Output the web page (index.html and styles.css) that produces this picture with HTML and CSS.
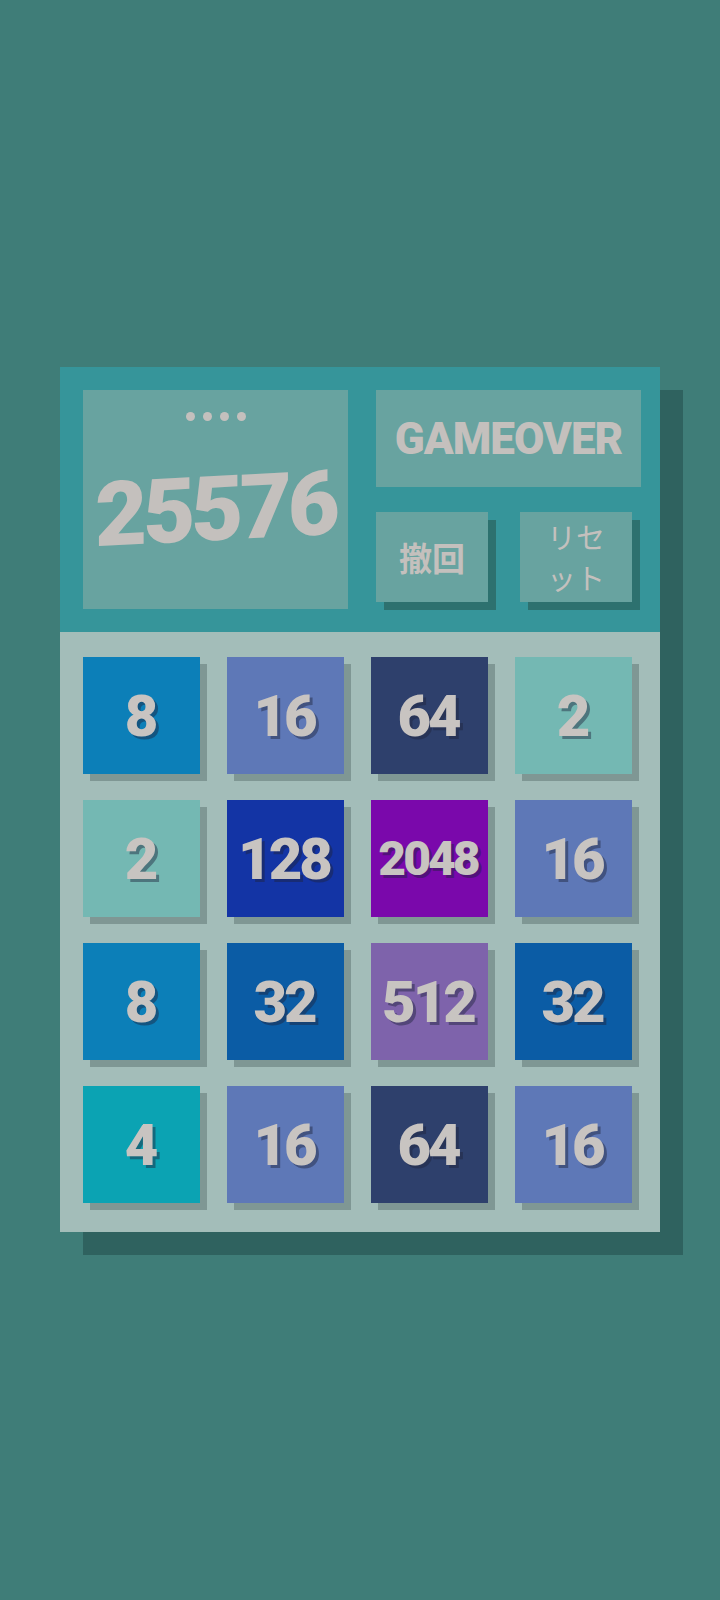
FILE: index.html
```html
<!DOCTYPE html>
<html lang="ja">
<head>
<meta charset="utf-8">
<title>2048</title>
<link rel="stylesheet" href="styles.css">
</head>
<body>
<div class="panel">
  <div class="header">
    <div class="score-box">
      <div class="dots"><span></span><span></span><span></span><span></span></div>
      <div class="score">25576</div>
    </div>
    <div class="side">
      <div class="status">GAMEOVER</div>
      <div class="buttons">
        <div class="btn btn-undo">撤回</div>
        <div class="btn btn-reset">リセ<br>ット</div>
      </div>
    </div>
  </div>
  <div class="board">
    <div class="tile t8">8</div>
    <div class="tile t16">16</div>
    <div class="tile t64">64</div>
    <div class="tile t2">2</div>
    <div class="tile t2">2</div>
    <div class="tile t128">128</div>
    <div class="tile t2048 four">2048</div>
    <div class="tile t16">16</div>
    <div class="tile t8">8</div>
    <div class="tile t32">32</div>
    <div class="tile t512">512</div>
    <div class="tile t32">32</div>
    <div class="tile t4">4</div>
    <div class="tile t16">16</div>
    <div class="tile t64">64</div>
    <div class="tile t16">16</div>
  </div>
</div>
</body>
</html>
```
FILE: styles.css
```css
html, body {
  margin: 0;
  padding: 0;
  background: #3f7d78;
}
body {
  height: 1600px;
  font-family: Roboto, "Noto Sans CJK JP", sans-serif;
  color: #c4c0bd;
}
.panel {
  width: 600px;
  margin: 367px 0 0 60px;
  box-shadow: 23px 23px 0 #2f625f;
}
.header {
  background: #36959a;
  height: 265px;
  box-sizing: border-box;
  padding: 23px 19px 23px 23px;
  display: grid;
  grid-template-columns: 265px 265px;
  column-gap: 28px;
}
.score-box {
  background: #68a3a0;
  display: flex;
  flex-direction: column;
  align-items: center;
}
.dots {
  display: flex;
  gap: 8px;
  margin-top: 22px;
}
.dots span {
  width: 9px;
  height: 9px;
  border-radius: 50%;
  background: #c4c0bd;
}
.score {
  font-family: Roboto, sans-serif;
  font-weight: 900;
  font-size: 90px;
  letter-spacing: -4px;
  line-height: 1;
  margin-top: 44px;
  transform: skewY(-3deg);
}
.side {
  display: flex;
  flex-direction: column;
  gap: 25px;
}
.status {
  background: #68a3a0;
  height: 97px;
  display: flex;
  align-items: center;
  justify-content: center;
  font-family: Roboto, sans-serif;
  font-weight: 900;
  font-size: 44px;
  letter-spacing: -1px;
}
.buttons {
  display: flex;
  gap: 32px;
}
.btn {
  width: 112px;
  height: 90px;
  background: #68a3a0;
  box-shadow: 8px 8px 0 #2d716f;
  display: flex;
  align-items: center;
  justify-content: center;
  text-align: center;
  font-family: "Noto Sans CJK JP", sans-serif;
}
.btn-undo {
  font-size: 33px;
  font-weight: 700;
}
.btn-reset {
  font-size: 29px;
  font-weight: 400;
  line-height: 41px;
}
.board {
  background: #a3bdb9;
  height: 600px;
  box-sizing: border-box;
  padding: 25px 0 0 23px;
  display: grid;
  grid-template-columns: repeat(4, 117px);
  grid-auto-rows: 117px;
  gap: 26px 27px;
}
.tile {
  box-shadow: 7px 7px 0 #7f9794;
  display: flex;
  align-items: center;
  justify-content: center;
  font-family: Roboto, sans-serif;
  font-weight: 900;
  font-size: 58px;
  letter-spacing: -3px;
  color: #c8c4c1;
  text-shadow: 3px 3px 0 rgba(30, 35, 60, 0.45);
  padding-right: 3px;
}
.tile.four {
  font-size: 48px;
  letter-spacing: -3px;
}
.t2 { background: #74b8b3; }
.t4 { background: #0ba3b3; }
.t8 { background: #0c7fb8; }
.t16 { background: #5e78b7; }
.t32 { background: #0b5ca5; }
.t64 { background: #2e406c; }
.t128 { background: #1334a5; }
.t512 { background: #7e63ab; }
.t2048 { background: #7a08ab; }
```
